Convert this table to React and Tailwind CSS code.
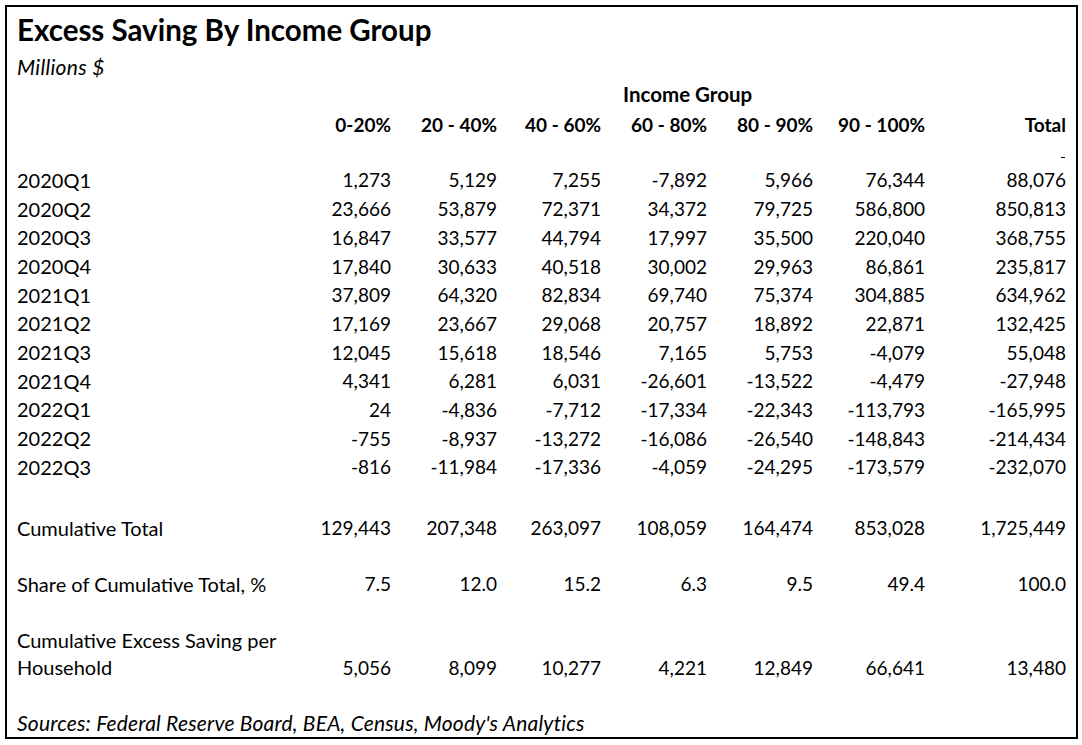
import React from 'react';

const cols = ['0-20%', '20 - 40%', '40 - 60%', '60 - 80%', '80 - 90%', '90 - 100%', 'Total'];

const rows = [
  ['2020Q1', '1,273', '5,129', '7,255', '-7,892', '5,966', '76,344', '88,076'],
  ['2020Q2', '23,666', '53,879', '72,371', '34,372', '79,725', '586,800', '850,813'],
  ['2020Q3', '16,847', '33,577', '44,794', '17,997', '35,500', '220,040', '368,755'],
  ['2020Q4', '17,840', '30,633', '40,518', '30,002', '29,963', '86,861', '235,817'],
  ['2021Q1', '37,809', '64,320', '82,834', '69,740', '75,374', '304,885', '634,962'],
  ['2021Q2', '17,169', '23,667', '29,068', '20,757', '18,892', '22,871', '132,425'],
  ['2021Q3', '12,045', '15,618', '18,546', '7,165', '5,753', '-4,079', '55,048'],
  ['2021Q4', '4,341', '6,281', '6,031', '-26,601', '-13,522', '-4,479', '-27,948'],
  ['2022Q1', '24', '-4,836', '-7,712', '-17,334', '-22,343', '-113,793', '-165,995'],
  ['2022Q2', '-755', '-8,937', '-13,272', '-16,086', '-26,540', '-148,843', '-214,434'],
  ['2022Q3', '-816', '-11,984', '-17,336', '-4,059', '-24,295', '-173,579', '-232,070'],
];

const cumulative = ['Cumulative Total', '129,443', '207,348', '263,097', '108,059', '164,474', '853,028', '1,725,449'];
const share = ['Share of Cumulative Total, %', '7.5', '12.0', '15.2', '6.3', '9.5', '49.4', '100.0'];
const perHousehold = ['5,056', '8,099', '10,277', '4,221', '12,849', '66,641', '13,480'];

const grid = 'grid grid-cols-[280px_94px_106px_104px_106px_106px_112px_141px] items-center';

const Row = ({ cells, h = 'h-[28.7px]' }) => (
  <div className={`${grid} ${h}`}>
    {cells.map((c, i) => (
      <div key={i} className={i === 0 ? 'text-left whitespace-nowrap text-[20px]' : 'text-right whitespace-nowrap'}>{c}</div>
    ))}
  </div>
);

export default function App() {
  return (
    <div className="w-[1082px] h-[745px] bg-white p-[5px] text-black" style={{ fontFamily: 'Lato, "Open Sans", sans-serif' }}>
      <div className="w-[1073px] h-[734px] border-2 border-black pl-[10px] text-[19px] leading-none">
        <div className="h-[46px] flex items-end pb-[9px]">
          <h1 className="text-[29.5px] font-bold">Excess Saving By Income Group</h1>
        </div>
        <div className="h-[26px] flex items-center italic text-[21px] tracking-[0.3px]">Millions $</div>

        <div className={`${grid} h-[30px] font-bold`}>
          <div className="col-start-5 pl-[22px] whitespace-nowrap text-[20.5px]">Income Group</div>
        </div>
        <div className={`${grid} h-[30px] font-bold`}>
          <div />
          {cols.map((c) => (
            <div key={c} className="text-right whitespace-nowrap">{c}</div>
          ))}
        </div>
        <div className={`${grid} h-[26.6px] items-start`}>
          <div className="col-start-8 flex justify-end pt-[18px] pr-[1px]">
            <div className="w-[4px] h-[1px] bg-black" />
          </div>
        </div>

        {rows.map((r) => (
          <Row key={r[0]} cells={r} />
        ))}

        <div className="h-[32.4px]" />
        <Row cells={cumulative} />
        <div className="h-[27.3px]" />
        <Row cells={share} />
        <div className="h-[28.6px]" />

        <div className={`${grid} h-[54px] items-end`}>
          <div className="leading-[27px] whitespace-nowrap text-[20px]">
            Cumulative Excess Saving per
            <br />
            Household
          </div>
          {perHousehold.map((v, i) => (
            <div key={i} className="text-right leading-[27px]">{v}</div>
          ))}
        </div>

        <div className="h-[28px]" />
        <div className="h-[28px] flex items-center italic whitespace-nowrap text-[21px] tracking-[0.2px]">
          Sources: Federal Reserve Board, BEA, Census, Moody's Analytics
        </div>
      </div>
    </div>
  );
}
